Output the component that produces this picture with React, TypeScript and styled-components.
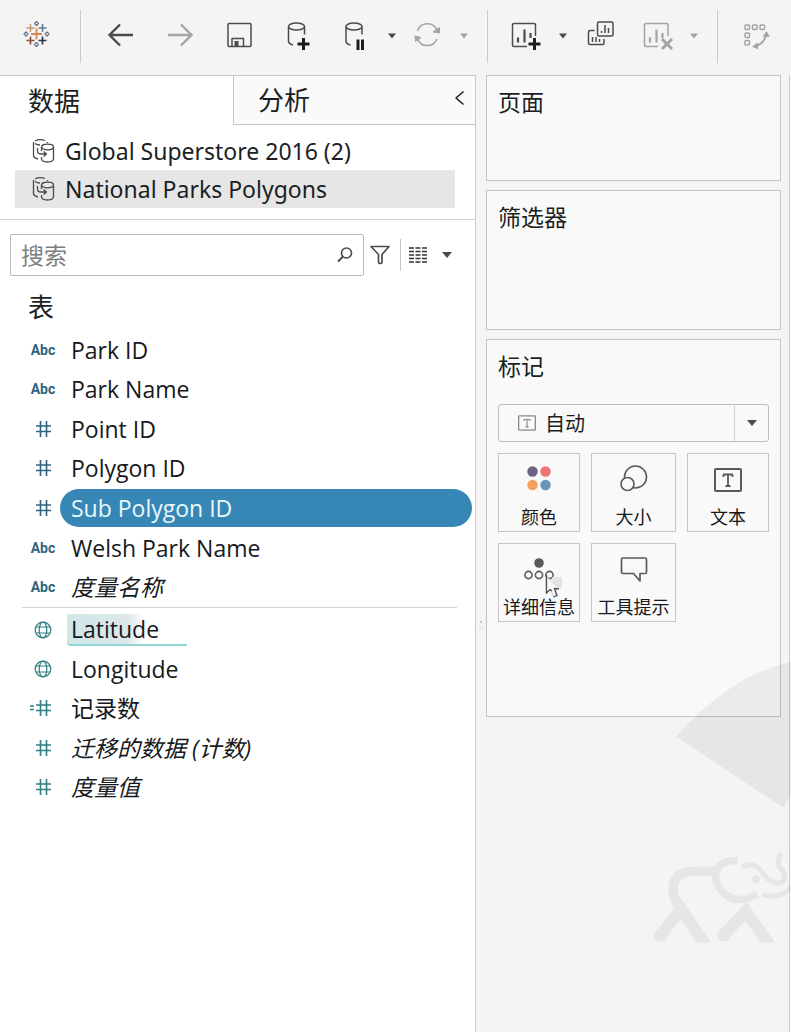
import React from "react";
import styled, { createGlobalStyle, css } from "styled-components";

const GlobalStyle = createGlobalStyle`
  *, *::before, *::after { box-sizing: border-box; }
  body { margin: 0; background: #f4f4f4; }
  body, button, input, select {
    font-family: "Open Sans", "Noto Sans CJK SC", sans-serif;
    color: #1b1f24;
  }
  button { border: 0; padding: 0; background: none; cursor: pointer; }
  h2, ul { margin: 0; padding: 0; font-weight: 400; list-style: none; }
  svg { display: block; flex: none; }
`;

const Page = styled.div`
  position: relative;
  min-height: 100vh;
  display: flex;
  flex-direction: column;
  overflow: hidden;
  background: #f4f4f4;
`;

/* Toolbar */

const Toolbar = styled.header`
  display: flex;
  align-items: center;
  height: 75px;
  padding-bottom: 3px;
`;

const ToolGroup = styled.div<{ $brand?: boolean }>`
  display: flex;
  align-items: center;
  gap: 27px;
  padding: ${(p) => (p.$brand ? "0 27px 0 21px" : "0 15px 0 23px")};
`;

const SplitGroup = styled.div`
  display: flex;
  gap: 12px;
`;

const Separator = styled.span`
  flex: none;
  width: 1px;
  height: 53px;
  background: #cacaca;
`;

const ToolButton = styled.button<{ $muted?: boolean; $narrow?: boolean }>`
  display: grid;
  place-items: center;
  width: ${(p) => (p.$narrow ? "16px" : "32px")};
  height: 32px;
  color: ${(p) => (p.$muted ? "#a3a3a3" : "#4b4b4b")};
`;

/* Panes */

const Workspace = styled.main`
  flex: 1;
  display: grid;
  grid-template-columns: minmax(0, 476fr) 10px minmax(0, 295fr) 8px 2px;
`;

const DataPane = styled.section`
  display: flex;
  flex-direction: column;
  border-top: 1px solid #c6c6c6;
  border-right: 1px solid #cbcbcb;
  background: #fff;
`;

const PaneEdge = styled.div`
  display: flex;
  flex-direction: column;
  align-items: center;
  padding-top: 546px;
  color: #b5b5b5;
`;

const CanvasEdge = styled.div`
  border-left: 1px solid #cbcbcb;
  background: #fafafa;
`;

const TabBar = styled.div`
  display: grid;
  grid-template-columns: minmax(0, 233fr) minmax(0, 242fr);
  height: 49px;
`;

const Tab = styled.button<{ $active?: boolean }>`
  display: flex;
  align-items: center;
  justify-content: space-between;
  padding: ${(p) => (p.$active ? "0 0 0 28px" : "0 10px 0 24px")};
  font-size: 26px;
  line-height: 32px;
  ${(p) =>
    !p.$active &&
    css`
      border-left: 1px solid #c6c6c6;
      border-bottom: 1px solid #c6c6c6;
      background: #fafafa;
    `}
`;

const Sources = styled.ul`
  padding: 7px 20px 11px 15px;
  border-bottom: 1px solid #d2d2d2;
`;

const Source = styled.button<{ $selected?: boolean }>`
  display: flex;
  align-items: center;
  gap: 10px;
  width: 100%;
  height: 38px;
  padding-left: 17px;
  font-family: "Noto Sans", "Noto Sans CJK SC", sans-serif;
  font-size: 23px;
  line-height: 30px;
  white-space: nowrap;
  background: ${(p) => (p.$selected ? "#e6e6e6" : "transparent")};
`;

const SearchRow = styled.div`
  display: flex;
  align-items: center;
  padding: 14px 20px 0 10px;
`;

const SearchBox = styled.label`
  flex: 1;
  min-width: 0;
  display: flex;
  align-items: center;
  height: 42px;
  padding: 0 10px;
  border: 1px solid #b9b9b9;
  border-radius: 2px;
  color: #4b4b4b;
`;

const SearchInput = styled.input`
  flex: 1;
  min-width: 0;
  padding: 0;
  border: 0;
  outline: 0;
  background: transparent;
  font-size: 23px;
  line-height: 32px;
  &::placeholder { color: #7e7e7e; opacity: 1; }
`;

const FilterButton = styled.button`
  padding: 0 10px 0 6px;
  color: #4b4b4b;
`;

const ViewButton = styled.button`
  display: flex;
  align-items: center;
  justify-content: space-between;
  width: 55px;
  height: 32px;
  padding: 0 3px 0 8px;
  border-left: 1px solid #c6c6c6;
  color: #4b4b4b;
`;

const TablesHeading = styled.h2`
  padding: 15px 0 7px 28px;
  font-size: 26px;
  line-height: 32px;
`;

const FieldList = styled.ul<{ $divided?: boolean }>`
  display: grid;
  grid-auto-rows: 1fr;
  min-height: ${(p) => (p.$divided ? "277px" : "197px")};
  margin: 0 3px 0 22px;
  color: ${(p) => (p.$divided ? "#2f647f" : "#2f7f80")};
`;

const ListDivider = styled.hr`
  width: auto;
  height: 1px;
  margin: 0 18px 2px 22px;
  border: 0;
  background: #cfd3d5;
`;

const Field = styled.button<{ $selected?: boolean; $italic?: boolean }>`
  display: flex;
  align-items: center;
  width: 100%;
  height: 100%;
  color: inherit;
  font-style: ${(p) => (p.$italic ? "italic" : "normal")};
`;

const FieldType = styled.span`
  flex: none;
  display: grid;
  justify-items: center;
  width: 38px;
  padding-left: 4px;
  font-family: Roboto, sans-serif;
  font-size: 14px;
  font-weight: 700;
  font-style: normal;
  line-height: 16px;
`;

const FieldPill = styled.span<{ $selected?: boolean }>`
  flex: 1;
  display: flex;
  align-items: center;
  height: 38px;
  padding-left: 11px;
  border-radius: 19px;
  font-size: 23px;
  line-height: 30px;
  white-space: nowrap;
  color: ${(p) => (p.$selected ? "#e9f7fb" : "#16191d")};
  background: ${(p) => (p.$selected ? "#3787b6" : "transparent")};
`;

const Trail = styled.span`
  margin-left: -4px;
  padding: 0 28px 0 4px;
  border-bottom: 2px solid #8fd6d6;
  border-bottom-left-radius: 4px;
  background: linear-gradient(90deg, #cfe8e8, #dce8e9 50%, rgba(255, 255, 255, 0) 65%);
`;

/* Shelves */

const Shelves = styled.section`
  display: flex;
  flex-direction: column;
  gap: 9px;
`;

const Card = styled.section<{ $height: number }>`
  min-height: ${(p) => p.$height}px;
  padding: 10px 11px;
  border: 1px solid #c3c3c3;
  background: #f9f9f9;
`;

const CardTitle = styled.h2`
  font-size: 23px;
  line-height: 32px;
`;

const MarkSelectBox = styled.label`
  position: relative;
  display: flex;
  align-items: center;
  height: 38px;
  margin: 22px 0 11px;
  border: 1px solid #bdbdbd;
  border-radius: 3px;
  color: #8a8a8a;
`;

const MarkSelect = styled.select`
  flex: 1;
  align-self: stretch;
  min-width: 0;
  padding: 0 0 0 46px;
  border: 0;
  outline: 0;
  appearance: none;
  background: transparent;
  font-size: 20px;
`;

const SelectIcon = styled.span`
  position: absolute;
  left: 19px;
  top: 9px;
  pointer-events: none;
`;

const SelectArrow = styled.span`
  display: grid;
  place-items: center;
  width: 34px;
  height: 100%;
  border-left: 1px solid #d0d0d0;
  color: #4b4b4b;
  pointer-events: none;
`;

const MarkGrid = styled.div`
  display: grid;
  grid-template-columns: minmax(0, 82fr) minmax(0, 85fr) minmax(0, 82fr);
  gap: 11px;
`;

const MarkButton = styled.button`
  position: relative;
  display: flex;
  flex-direction: column;
  align-items: center;
  justify-content: space-between;
  height: 79px;
  padding: 10px 0 1px;
  border: 1px solid #c6c6c6;
  color: #5a5a5a;
`;

const MarkLabel = styled.span`
  font-size: 18px;
  line-height: 26px;
  white-space: nowrap;
  color: #16191d;
`;

const Pointer = styled.svg`
  position: absolute;
  left: 46px;
  top: 29px;
`;

const Watermark = styled.svg`
  position: absolute;
  top: 640px;
  right: 0;
  pointer-events: none;
`;

/* Icons */

const line = { fill: "none", stroke: "currentColor", strokeLinejoin: "round" as const };

const Caret = ({ size = 10 }: { size?: number }) => (
  <svg width={size} height="6" viewBox="0 0 10 6" fill="currentColor">
    <path d="M0 0H10L5 6Z" />
  </svg>
);

const Icon32 = ({ children }: { children: React.ReactNode }) => (
  <svg width="32" height="32" viewBox="0 0 32 32" {...line} strokeWidth="1.5">
    {children}
  </svg>
);

const plus = (x: number, y: number, r: number) => `M${x - r} ${y}h${2 * r}M${x} ${y - r}v${2 * r}`;

const LogoIcon = () => (
  <Icon32>
    <path d={plus(15.5, 14, 5.5)} stroke="#d28a57" strokeWidth="1.8" />
    <path d={plus(9.5, 8, 4)} stroke="#c39a6b" />
    <path d={plus(21.5, 8, 4)} stroke="#61788a" />
    <path d={plus(9.5, 20.5, 4)} stroke="#8c4b45" strokeWidth="1.7" />
    <path d={plus(21.5, 20.5, 4)} stroke="#2d3550" strokeWidth="1.7" />
    <path
      d="M15.5 1.5l2 2-2 2-2-2zM15.5 22.5l2 2-2 2-2-2zM5 12l2 2-2 2-2-2zM26 12l2 2-2 2-2-2z"
      stroke="#66758f"
      strokeWidth="1.2"
    />
  </Icon32>
);

const BackIcon = () => (
  <Icon32>
    <path d="M29 15H6M16 4.5L5.5 15 16 25.5" strokeWidth="2.4" strokeLinejoin="miter" />
  </Icon32>
);

const ForwardIcon = () => (
  <Icon32>
    <path d="M5 15H28M18 4.5L28.5 15 18 25.5" strokeWidth="2.4" strokeLinejoin="miter" />
  </Icon32>
);

const SaveIcon = () => (
  <Icon32>
    <rect x="6" y="3.5" width="23" height="23" rx="1" />
    <path d="M10 26V18.5H21.5V26" />
    <rect x="12.5" y="21" width="4" height="5" fill="currentColor" stroke="none" />
  </Icon32>
);

const Cylinder = ({ x }: { x: number }) => (
  <g transform={`translate(${x} 0)`}>
    <ellipse cx="8" cy="6.5" rx="8" ry="3.5" />
    <path d="M0 6.5V21Q0 24 4.5 25M16 6.5V14.5" />
  </g>
);

const NewSourceIcon = () => (
  <Icon32>
    <Cylinder x={7.5} />
    <path d={plus(22.5, 24, 6)} stroke="#1d1d1d" strokeWidth="3" />
  </Icon32>
);

const PauseIcon = () => (
  <Icon32>
    <Cylinder x={6} />
    <path d="M18 19.5V30M22.5 19.5V30" stroke="#1d1d1d" strokeWidth="3" />
  </Icon32>
);

const RefreshIcon = () => (
  <Icon32>
    <path d="M5.5 11A10.5 10.5 0 0 1 25 10M25 19A10.5 10.5 0 0 1 5.5 19" />
    <path d="M21 12L27.5 13 27.5 7.5ZM9 17.5L3 16 3.500 21.500Z" fill="currentColor" strokeWidth="1" />
  </Icon32>
);

const ChartBars = () => (
  <path d="M7 17.5V22.5M13.5 9.5V22.5M19.5 13V18" strokeWidth="2.2" />
);

const NewSheetIcon = () => (
  <Icon32>
    <path d="M16 26.5H3Q1.5 26.5 1.5 25V5Q1.5 3.5 3 3.5H23Q24.5 3.5 24.5 5V16" />
    <ChartBars />
    <path d={plus(23.5, 24, 6)} stroke="#1d1d1d" strokeWidth="3" />
  </Icon32>
);

const DuplicateIcon = () => (
  <Icon32>
    <rect x="14.5" y="2" width="15.5" height="14" rx="1.5" />
    <path d="M11.5 10.5H7Q5.5 10.5 5.5 12V23Q5.5 24.5 7 24.5H19.5Q21 24.5 21 23V19" />
    <path d="M18.5 11V13M22 5V13M25.5 8V13M9.5 17V22M13 17V22M16.5 19V22" />
  </Icon32>
);

const ClearIcon = () => (
  <Icon32>
    <path d="M16 26.5H4Q2.5 26.5 2.5 25V5Q2.5 3.5 4 3.5H24.5Q26 3.5 26 5V16" />
    <g transform="translate(1 0)">
      <ChartBars />
    </g>
    <path d="M20 19L30 29M30 19L20 29" strokeWidth="3" />
  </Icon32>
);

const SwapIcon = () => (
  <Icon32>
    {[[4, 5], [11.5, 5], [19, 5], [4, 13], [4, 20.5]].map(([x, y]) => (
      <rect key={`${x}-${y}`} x={x} y={y} width="4.5" height="4.5" rx="1" />
    ))}
    <path d="M25.5 13Q24 24 13 26.5" strokeWidth="1.8" />
    <path d="M22 16.5L25.500 11.500 28.500 16.500ZM16.500 23L11.500 26.500 17 29Z" fill="currentColor" strokeWidth=".5" />
  </Icon32>
);

const SourceIcon = () => (
  <svg width="23" height="26" viewBox="0 0 23 26" {...line} strokeWidth="1.3" stroke="#4b4b4b">
    <path d="M3 3Q7.5 .5 13 2.5M1.5 4V18Q2 20 6 21M3 5.5Q5 7 8 7M15.5 4V5" />
    <ellipse cx="15.5" cy="9" rx="6" ry="2.8" />
    <path d="M9.5 9V13M21.5 9V21Q21 24 15.5 24 10 24 9.5 21V19" />
    <path d="M5.5 10V13Q5.5 16 9 16H14M11.5 13.5L14.5 16 11.5 18.5" />
  </svg>
);

const SearchIcon = () => (
  <svg width="16" height="16" viewBox="0 0 16 16" {...line} strokeWidth="1.6">
    <circle cx="9.5" cy="6" r="5" />
    <path d="M6 9.5L1 14.5" strokeWidth="2" />
  </svg>
);

const FilterIcon = () => (
  <svg width="20" height="20" viewBox="0 0 20 20" {...line} strokeWidth="1.7">
    <path d="M1 1.5H19L12 9.5V17Q12 18.5 10 18.5 8.5 18.5 8.5 17V9.5Z" />
  </svg>
);

const ListIcon = () => (
  <svg width="20" height="16" viewBox="0 0 20 16" fill="none" stroke="#333" strokeWidth="1.7">
    {[1, 4.5, 8, 11.5, 15].map((y) => (
      <path key={y} d={`M0 ${y}h5M6.500 ${y}h5M13 ${y}h5`} />
    ))}
  </svg>
);

const HashIcon = ({ calculated }: { calculated?: boolean }) => (
  <svg width="28" height="16" viewBox="0 0 28 16" {...line} strokeWidth="1.6">
    <path d="M7 5H22M7 10.5H22M11.5 0V16M17.5 0V16" />
    {calculated && <path d="M1 6H5M1 9.5H5" />}
  </svg>
);

const GlobeIcon = () => (
  <svg width="18" height="18" viewBox="0 0 18 18" {...line} strokeWidth="1.2">
    <circle cx="9" cy="9" r="7.8" />
    <ellipse cx="9" cy="9" rx="3.8" ry="7.8" />
    <path d="M2 6H16M2 12H16" />
  </svg>
);

const TextIcon = ({ width, height }: { width: number; height: number }) => (
  <svg width={width} height={height} viewBox="0 0 28 24" {...line} strokeWidth="2">
    <rect x="1" y="1" width="26" height="22" rx="1" />
    <path d="M9.5 9V6.500H18.500V9M14 6.500V18M11.500 18H16.500" strokeWidth="1.8" />
  </svg>
);

const ColorIcon = () => (
  <svg width="28" height="28" viewBox="0 0 28 28">
    <circle cx="7.500" cy="7.500" r="5.2" fill="#6f6280" />
    <circle cx="20.500" cy="7.500" r="5.2" fill="#ee7472" />
    <circle cx="7.500" cy="21" r="5.2" fill="#f5a05f" />
    <circle cx="20.500" cy="21" r="5.2" fill="#6a93bd" />
  </svg>
);

const SizeIcon = () => (
  <svg width="28" height="28" viewBox="0 0 28 28" {...line} strokeWidth="1.6">
    <circle cx="15.5" cy="13" r="11" />
    <circle cx="7.5" cy="20" r="6.5" fill="#f9f9f9" />
  </svg>
);

const DetailIcon = () => (
  <svg width="30" height="28" viewBox="0 0 30 28" {...line} strokeWidth="1.6">
    <circle cx="15" cy="9" r="4" fill="currentColor" />
    <circle cx="4.5" cy="21" r="3.6" />
    <circle cx="15" cy="21" r="3.6" />
    <circle cx="25.5" cy="21" r="3.6" />
  </svg>
);

const TooltipIcon = () => (
  <svg width="28" height="28" viewBox="0 0 28 28" {...line} strokeWidth="1.7">
    <path d="M3 4H25Q26.5 4 26.5 5.5V18Q26.5 19.5 25 19.5H20V27L13.5 19.5H3Q1.5 19.5 1.5 18V5.5Q1.5 4 3 4Z" />
  </svg>
);

/* Data */

type Kind = "text" | "number" | "geo" | "calc";
type FieldItem = { name: string; kind: Kind; italic?: boolean; selected?: boolean; trail?: boolean };

const dimensions: FieldItem[] = [
  { name: "Park ID", kind: "text" },
  { name: "Park Name", kind: "text" },
  { name: "Point ID", kind: "number" },
  { name: "Polygon ID", kind: "number" },
  { name: "Sub Polygon ID", kind: "number", selected: true },
  { name: "Welsh Park Name", kind: "text" },
  { name: "度量名称", kind: "text", italic: true },
];

const measures: FieldItem[] = [
  { name: "Latitude", kind: "geo", trail: true },
  { name: "Longitude", kind: "geo" },
  { name: "记录数", kind: "calc" },
  { name: "迁移的数据 (计数)", kind: "number", italic: true },
  { name: "度量值", kind: "number", italic: true },
];

const kindIcon: Record<Kind, React.ReactNode> = {
  text: "Abc",
  number: <HashIcon />,
  geo: <GlobeIcon />,
  calc: <HashIcon calculated />,
};

const FieldRow = ({ item }: { item: FieldItem }) => (
  <li>
    <Field type="button" $italic={item.italic}>
      <FieldType>{kindIcon[item.kind]}</FieldType>
      <FieldPill $selected={item.selected}>
        {item.trail ? <Trail>{item.name}</Trail> : item.name}
      </FieldPill>
    </Field>
  </li>
);

const Tool = ({ label, muted, children }: { label: string; muted?: boolean; children: React.ReactNode }) => (
  <ToolButton type="button" aria-label={label} $muted={muted}>
    {children}
  </ToolButton>
);

const SplitTool = ({ label, muted, children }: { label: string; muted?: boolean; children: React.ReactNode }) => (
  <SplitGroup>
    <Tool label={label} muted={muted}>{children}</Tool>
    <ToolButton type="button" aria-label={`${label} ▾`} $muted={muted} $narrow>
      <Caret size={8} />
    </ToolButton>
  </SplitGroup>
);

const marks = [
  { name: "颜色", icon: <ColorIcon /> },
  { name: "大小", icon: <SizeIcon /> },
  { name: "文本", icon: <TextIcon width={28} height={32} /> },
  { name: "详细信息", icon: <DetailIcon />, hovered: true },
  { name: "工具提示", icon: <TooltipIcon /> },
];

export default function App() {
  return (
    <Page>
      <GlobalStyle />
      <Toolbar>
        <ToolGroup $brand>
          <Tool label="Tableau"><LogoIcon /></Tool>
        </ToolGroup>
        <Separator />
        <ToolGroup>
          <Tool label="后退"><BackIcon /></Tool>
          <Tool label="前进" muted><ForwardIcon /></Tool>
          <Tool label="保存"><SaveIcon /></Tool>
          <Tool label="新建数据源"><NewSourceIcon /></Tool>
          <SplitGroup>
            <SplitTool label="暂停自动更新"><PauseIcon /></SplitTool>
            <SplitTool label="运行更新" muted><RefreshIcon /></SplitTool>
          </SplitGroup>
        </ToolGroup>
        <Separator />
        <ToolGroup>
          <SplitGroup>
            <SplitTool label="新建工作表"><NewSheetIcon /></SplitTool>
            <Tool label="复制"><DuplicateIcon /></Tool>
          </SplitGroup>
          <SplitTool label="清除工作表" muted><ClearIcon /></SplitTool>
        </ToolGroup>
        <Separator />
        <ToolGroup>
          <Tool label="交换行和列" muted><SwapIcon /></Tool>
        </ToolGroup>
      </Toolbar>

      <Workspace>
        <DataPane>
          <TabBar>
            <Tab type="button" $active>数据</Tab>
            <Tab type="button">
              分析
              <svg width="11" height="20" viewBox="0 0 11 20" {...line} strokeWidth="1.6">
                <path d="M9.5 1.500L2 8L9.500 14.500" />
              </svg>
            </Tab>
          </TabBar>
          <Sources>
            <li><Source type="button"><SourceIcon />Global Superstore 2016 (2)</Source></li>
            <li><Source type="button" $selected><SourceIcon />National Parks Polygons</Source></li>
          </Sources>
          <SearchRow>
            <SearchBox>
              <SearchInput type="text" placeholder="搜索" aria-label="搜索" />
              <SearchIcon />
            </SearchBox>
            <FilterButton type="button" aria-label="筛选"><FilterIcon /></FilterButton>
            <ViewButton type="button" aria-label="视图"><ListIcon /><Caret /></ViewButton>
          </SearchRow>
          <TablesHeading>表</TablesHeading>
          <FieldList $divided>
            {dimensions.map((item) => <FieldRow key={item.name} item={item} />)}
          </FieldList>
          <ListDivider />
          <FieldList>
            {measures.map((item) => <FieldRow key={item.name} item={item} />)}
          </FieldList>
        </DataPane>

        <PaneEdge>
          <svg width="4" height="8" viewBox="0 0 4 8" fill="currentColor">
            <circle cx="2" cy="1" r="1" />
            <path d="M0 6H4V7H0Z" opacity=".4" />
          </svg>
        </PaneEdge>

        <Shelves>
          <Card $height={106}><CardTitle>页面</CardTitle></Card>
          <Card $height={140}><CardTitle>筛选器</CardTitle></Card>
          <Card $height={378}>
            <CardTitle>标记</CardTitle>
            <MarkSelectBox>
              <SelectIcon><TextIcon width={18} height={18} /></SelectIcon>
              <MarkSelect aria-label="标记" defaultValue="auto">
                <option value="auto">自动</option>
              </MarkSelect>
              <SelectArrow><Caret /></SelectArrow>
            </MarkSelectBox>
            <MarkGrid>
              {marks.map((mark) => (
                <MarkButton key={mark.name} type="button">
                  {mark.icon}
                  <MarkLabel>{mark.name}</MarkLabel>
                  {mark.hovered && (
                    <Pointer width="20" height="28" viewBox="0 0 20 28">
                      <path d="M7 4H17V15H9Z" fill="#e4e4e4" />
                      <path d="M1 3V20L5.5 16.5 8.5 24 12 22.5 9 15.5H14Z" fill="#fafafa" stroke="#d0d0d0" />
                      <path d="M1.5 2V20L5 16.5 7 18M8.5 24L12 22.5 9.5 15.5 14 16" fill="none" stroke="#4d4d4d" strokeWidth="1.3" />
                    </Pointer>
                  )}
                </MarkButton>
              ))}
            </MarkGrid>
          </Card>
        </Shelves>
        <span />
        <CanvasEdge />
      </Workspace>

      <Watermark width="151" height="320" viewBox="0 0 453 960" aria-hidden="true">
        <defs>
          <clipPath id="ground">
            <path d="M0 600H453V908H0Z" />
          </clipPath>
        </defs>
        <path d="M108 290Q185 205 250 160Q345 88 453 66V462L430 503Z" fill="#000" opacity=".055" />
        <g fill="none" stroke="#000" opacity=".055" clipPath="url(#ground)">
          <path d="M116 800Q88 755 106 718Q120 694 160 694H235" strokeWidth="28" />
          <path d="M62 886L122 806L200 920" strokeWidth="36" />
          <path d="M252 884L318 814L392 920" strokeWidth="36" />
          <path d="M62 886h0M252 884h0" strokeWidth="40" strokeLinecap="round" />
          <path d="M292 662Q250 660 234 682Q215 715 245 752Q285 800 352 762" strokeWidth="22" />
          <path d="M306 682Q335 662 362 692Q395 738 422 728Q448 710 418 680Q408 660 424 640" strokeWidth="15" />
          <path d="M368 764Q425 778 453 742" strokeWidth="15" />
          <circle cx="348" cy="718" r="6" strokeWidth="12" />
        </g>
      </Watermark>
    </Page>
  );
}
